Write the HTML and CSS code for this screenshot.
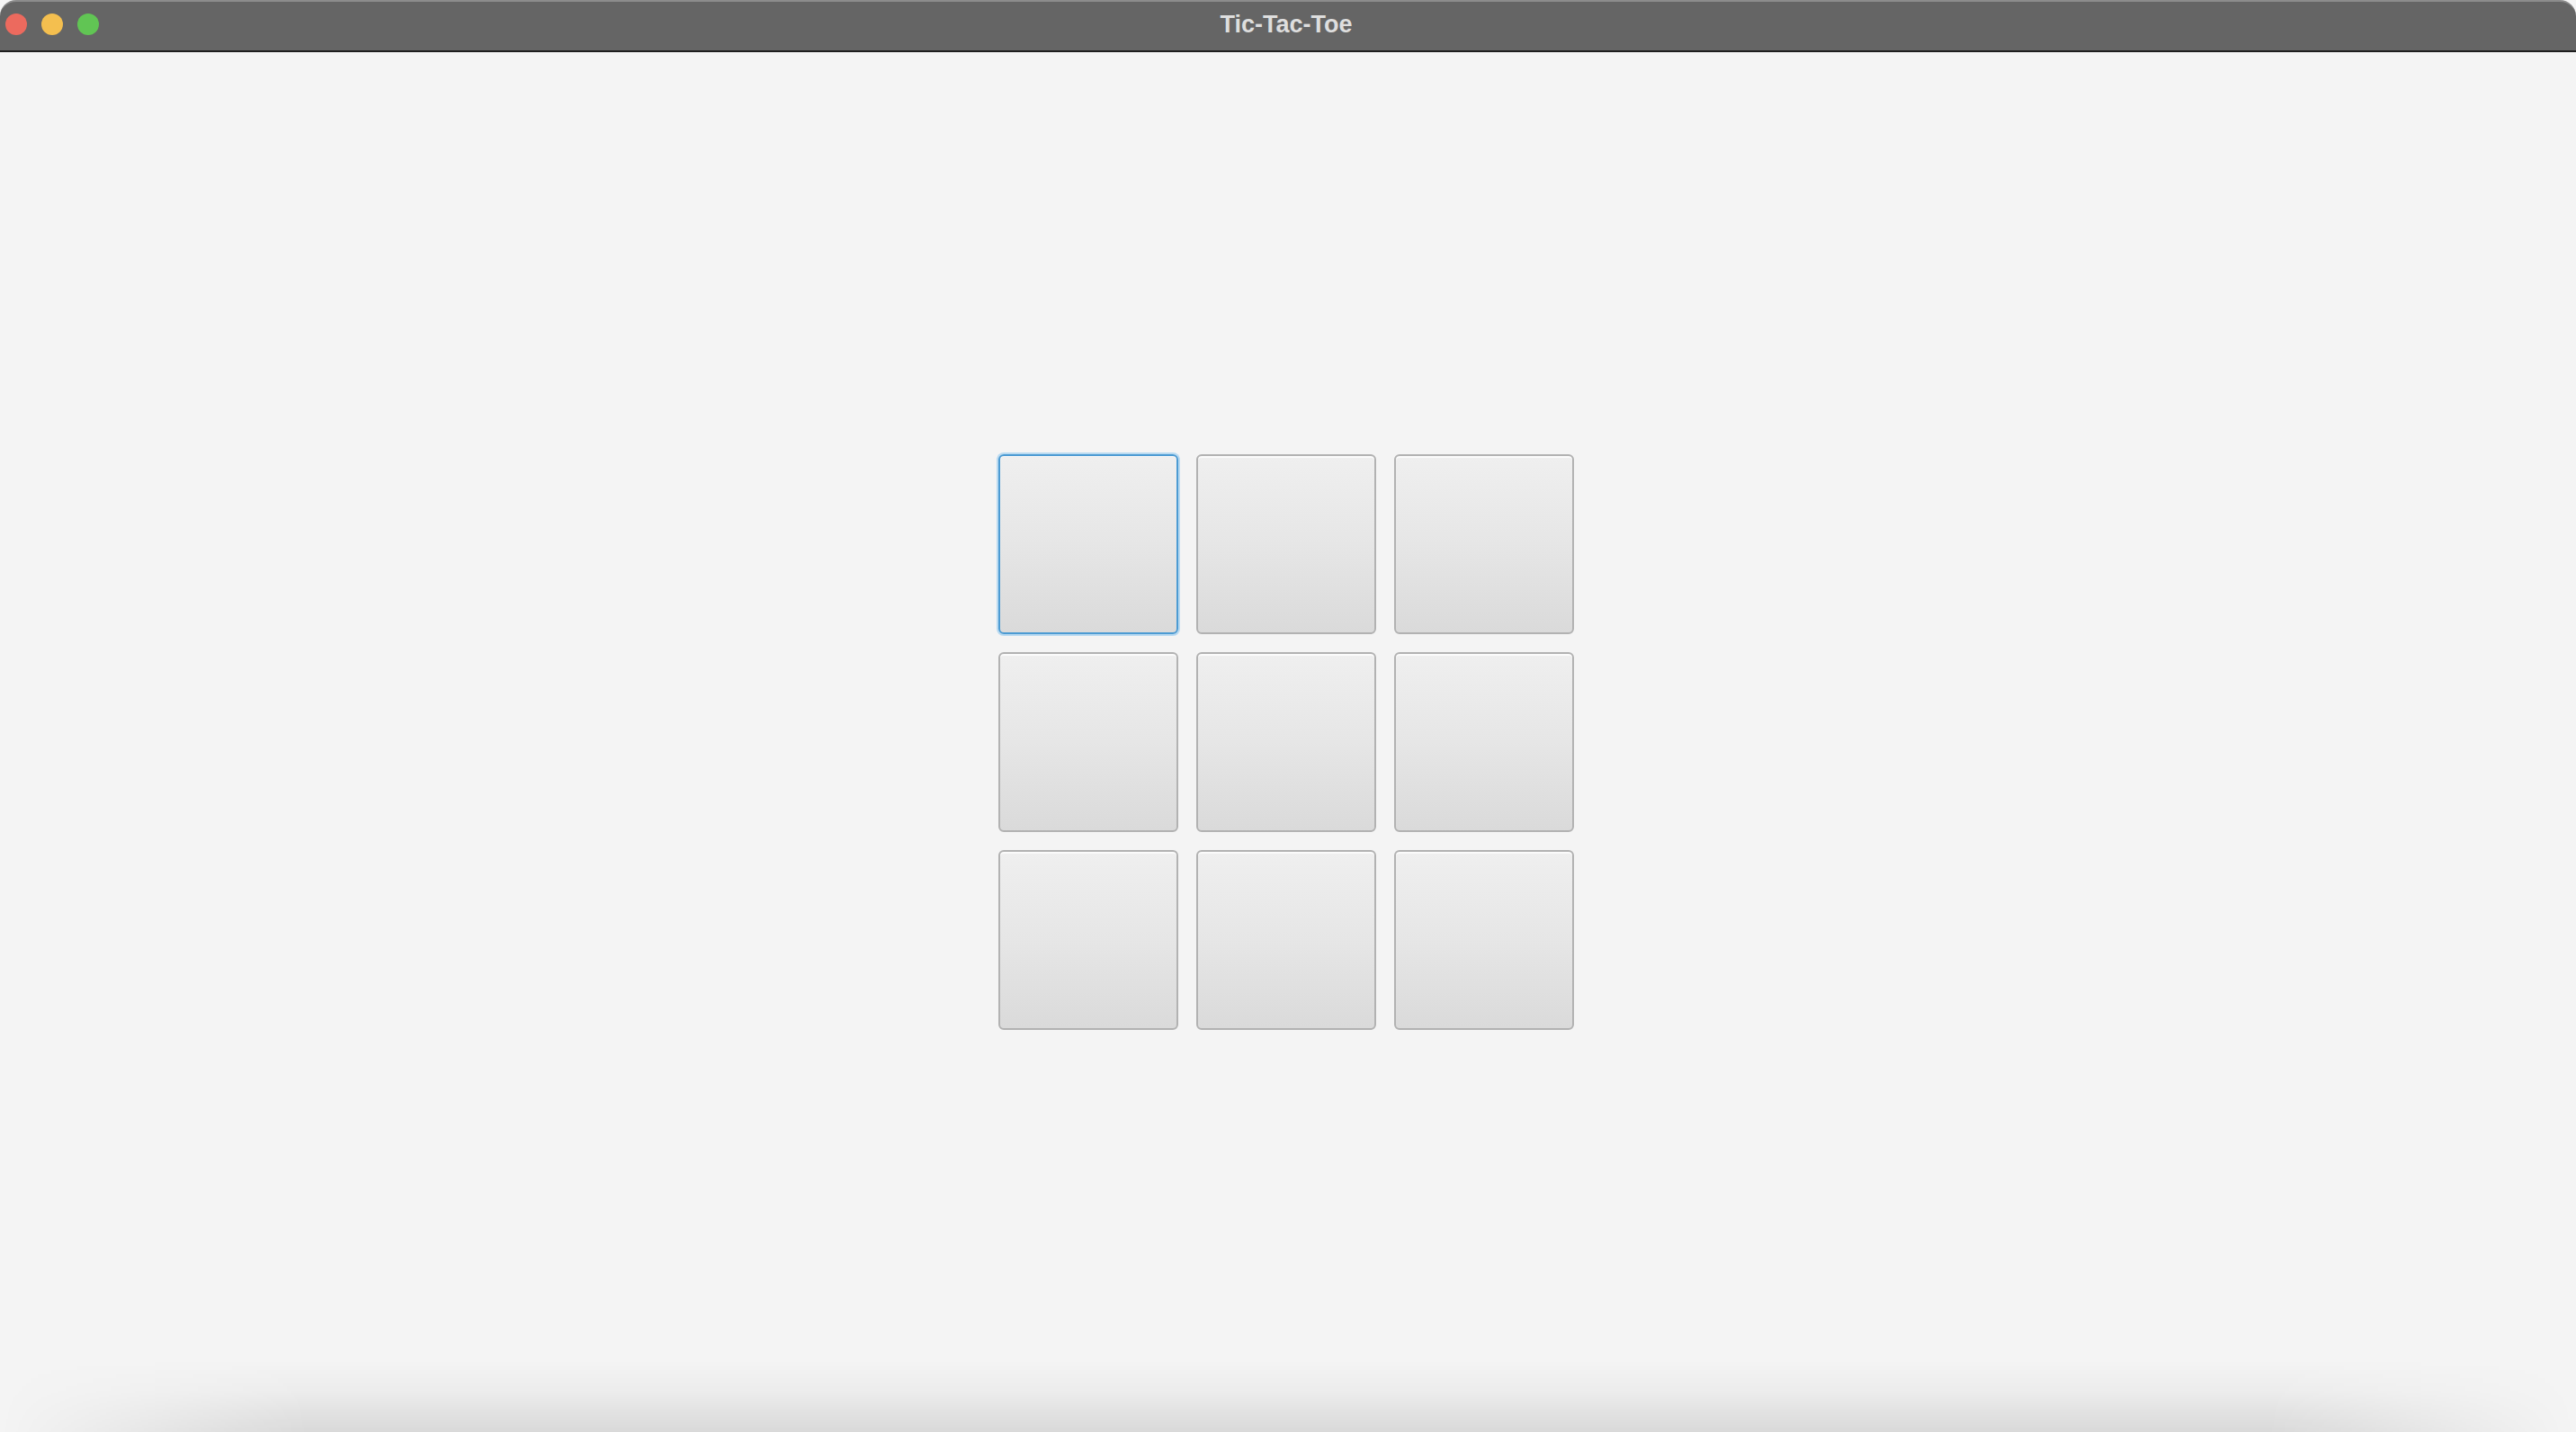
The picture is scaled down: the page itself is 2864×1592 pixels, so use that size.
FILE: index.html
```html
<!DOCTYPE html>
<html>
<head>
<meta charset="utf-8">
<title>Tic-Tac-Toe</title>
<link rel="stylesheet" href="styles.css">
</head>
<body>
<div class="window">
  <header class="titlebar">
    <div class="lights">
      <span class="light red"></span>
      <span class="light yellow"></span>
      <span class="light green"></span>
    </div>
    <div class="title">Tic-Tac-Toe</div>
  </header>
  <main class="content">
    <div class="board">
      <button class="cell focused"></button>
      <button class="cell"></button>
      <button class="cell"></button>
      <button class="cell"></button>
      <button class="cell"></button>
      <button class="cell"></button>
      <button class="cell"></button>
      <button class="cell"></button>
      <button class="cell"></button>
    </div>
    <div class="bottom-shade"></div>
  </main>
</div>
</body>
</html>
```
FILE: styles.css
```css
html, body {
  margin: 0;
  padding: 0;
  width: 2864px;
  height: 1592px;
  overflow: hidden;
  background: #f4f4f4;
  font-family: "Liberation Sans", Arial, sans-serif;
}
.window {
  width: 2864px;
  height: 1592px;
  display: flex;
  flex-direction: column;
}
.titlebar {
  position: relative;
  flex: none;
  background: #656565;
  border-top: 2px solid #8c8c8c;
  border-bottom: 2px solid #1e1e1e;
  border-radius: 18px 18px 0 0;
  box-sizing: border-box;
  height: 58px;
  display: flex;
  align-items: center;
  justify-content: center;
}
.lights {
  position: absolute;
  left: 6px;
  top: 13px;
  display: flex;
  gap: 16px;
}
.light {
  width: 24px;
  height: 24px;
  border-radius: 50%;
  display: block;
}
.red { background: #ec6a5e; }
.yellow { background: #f4bf4f; }
.green { background: #61c554; }
.title {
  color: #dedede;
  font-weight: bold;
  font-size: 27px;
  margin-top: -4px;
  margin-left: -4px;
}
.content {
  position: relative;
  flex: 1;
  display: flex;
  align-items: center;
  justify-content: center;
  background: #f4f4f4;
}
.board {
  display: grid;
  grid-template-columns: repeat(3, 200px);
  grid-template-rows: repeat(3, 200px);
  gap: 20px;
  margin-left: -4px;
}
.cell {
  box-sizing: border-box;
  width: 200px;
  height: 200px;
  margin: 0;
  padding: 0;
  border: 2px solid #b2b2b2;
  border-radius: 6px;
  background: linear-gradient(to bottom, #efefef 0%, #e6e6e6 50%, #dadada 100%);
  box-shadow: inset 0 2px 0 #fbfbfb;
}
.cell.focused {
  border-color: #4c9bd3;
  box-shadow: 0 0 0 2px #b9daf1, inset 0 1px 0 #f6f6f6;
}
.bottom-shade {
  position: absolute;
  left: 0;
  right: 0;
  bottom: 0;
  height: 80px;
  pointer-events: none;
  background: linear-gradient(to bottom, rgba(0,0,0,0) 0%, rgba(0,0,0,0.03) 45%, rgba(0,0,0,0.09) 85%, rgba(0,0,0,0.11) 100%);
  -webkit-mask-image: linear-gradient(to right, transparent 0%, black 12%, black 88%, transparent 100%);
  mask-image: linear-gradient(to right, transparent 0%, black 12%, black 88%, transparent 100%);
}
```
